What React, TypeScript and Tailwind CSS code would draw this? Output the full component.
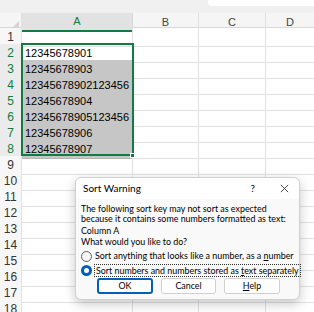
import React from "react";

const rows = [
  "",
  "12345678901",
  "12345678903",
  "12345678902123456",
  "12345678904",
  "12345678905123456",
  "12345678906",
  "12345678907",
  "", "", "", "", "", "", "", "", "", "",
];

function Radio({ checked }: { checked?: boolean }) {
  return checked ? (
    <span className="w-[11px] h-[11px] rounded-full bg-[#005fb8] flex items-center justify-center shrink-0">
      <span className="w-[5px] h-[5px] rounded-full bg-white" />
    </span>
  ) : (
    <span className="w-[11px] h-[11px] rounded-full border border-[#5f5f5f] bg-[#f6f6f6] shrink-0" />
  );
}

export default function App() {
  return (
    <div className="relative w-[314px] h-[312px] overflow-hidden bg-white" style={{ fontFamily: '"Liberation Sans", Arial, sans-serif' }}>
      {/* top strip */}
      <div className="flex h-[13px]">
        <div className="w-[208px] bg-[#f0f0f0]" />
        <div className="flex-1 flex flex-col bg-[#f0f0f0]">
          <div className="h-[6px] bg-white rounded-bl-[4px]" />
        </div>
      </div>

      {/* column headers */}
      <div className="grid grid-cols-[22px_111px_66px_67px_1fr] h-[15px] bg-[#f5f5f5] border-b border-[#d8d8d8] text-[11px] text-[#444]">
        <div className="relative border-r border-[#e0e0e0]">
          <div className="absolute right-[2px] bottom-[2px] w-0 h-0 border-l-[9px] border-l-transparent border-b-[9px] border-b-[#d5d5d5]" />
        </div>
        <div className="flex items-center justify-center bg-[#e2e2e2] text-[#107c41] border-b-2 border-[#107c41] border-r border-r-[#d8d8d8]">A</div>
        <div className="flex items-center justify-center border-r border-[#e0e0e0]">B</div>
        <div className="flex items-center justify-center border-r border-[#e0e0e0]">C</div>
        <div className="flex items-center justify-center">D</div>
      </div>

      {/* rows */}
      <div className="relative">
        {rows.map((v, i) => {
          const n = i + 1;
          const sel = n >= 2 && n <= 8;
          return (
            <div key={n} className="grid grid-cols-[22px_111px_66px_67px_1fr] h-[16px]">
              <div className={`flex items-center justify-center text-[12px] border-b border-r border-[#e1e1e1] ${sel ? "bg-[#ebebeb] text-[#107c41] border-r-[#107c41]" : "bg-[#f7f7f7] text-[#333]"}`}>{n}</div>
              <div className={`flex items-center pl-[3px] text-[11px] text-black whitespace-nowrap border-b border-r border-[#e1e1e1] ${n >= 3 && n <= 8 ? "bg-[#c6c6c6] border-b-[#b4b4b4]" : ""}`}>{v}</div>
              <div className="border-b border-r border-[#e1e1e1]" />
              <div className="border-b border-r border-[#e1e1e1]" />
              <div className="border-b border-[#e1e1e1]" />
            </div>
          );
        })}
        {/* selection border */}
        <div className="absolute left-[21px] top-[15px] w-[113px] h-[113px] border-2 border-[#107c41]" />
        <div className="absolute left-[130px] top-[125px] w-[5px] h-[5px] bg-[#107c41] border border-white" />
      </div>

      {/* dialog */}
      <div
        className="absolute left-[75px] top-[177px] w-[225px] h-[123px] rounded-[6px] bg-[#f9f9f9] border border-[#cfcfcf] shadow-[0_4px_12px_rgba(0,0,0,0.22)] text-[8.9px] text-black flex flex-col whitespace-nowrap"
        style={{ fontFamily: 'Lato, "Liberation Sans", sans-serif' }}
      >
        <div className="flex items-center h-[21px] pl-[7px] pr-[10px] text-[10px] bg-white rounded-t-[6px]">
          <span className="flex-1">Sort Warning</span>
          <span className="mr-[25px]">?</span>
          <svg width="9" height="9" viewBox="0 0 10 10" className="stroke-[#333]">
            <path d="M1 1L9 9M9 1L1 9" strokeWidth="1" />
          </svg>
        </div>
        <div className="flex flex-col px-[5px] pt-[5px] leading-[10px]">
          <div className="h-[10px]">The following sort key may not sort as expected</div>
          <div className="h-[10px]">because it contains some numbers formatted as text:</div>
          <div className="h-[10px] mt-[2px]">Column A</div>
          <div className="h-[10px] mt-[1px]">What would you like to do?</div>
          <div className="flex items-center gap-[3px] mt-[2px] h-[14px]">
            <Radio />
            <span>Sort anything that looks like a number, as a <u>n</u>umber</span>
          </div>
          <div className="flex items-center gap-[2px] h-[14px]">
            <Radio checked />
            <span className="border border-dotted border-[#333] px-[1px] leading-[11px]">Sort numbers and numbers stored as <u>t</u>ext separately</span>
          </div>
          <div className="flex gap-[8px] pl-[16px] mt-[1px]">
            <button className="w-[56px] h-[16px] rounded-[3px] bg-white border-2 border-[#005fb8] flex items-center justify-center">OK</button>
            <button className="w-[55px] h-[16px] rounded-[3px] bg-white border border-[#d0d0d0] flex items-center justify-center">Cancel</button>
            <button className="w-[56px] h-[16px] rounded-[3px] bg-white border border-[#d0d0d0] flex items-center justify-center"><span><u>H</u>elp</span></button>
          </div>
        </div>
      </div>
    </div>
  );
}
